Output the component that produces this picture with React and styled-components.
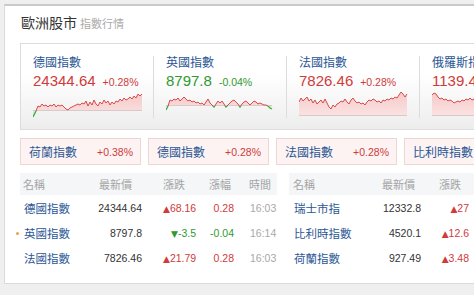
import React from "react";
import styled, { createGlobalStyle } from "styled-components";

const RED = "#cf3b3b";
const GREEN = "#2f9a2f";
const BLUE = "#2a5694";

const Global = createGlobalStyle`
  html, body { margin: 0; padding: 0; }
  body {
    background: #efefef;
    overflow: hidden;
    font-family: "Liberation Sans", "Noto Sans CJK TC", sans-serif;
  }
`;

const Card = styled.div`
  margin: 4px 0 0 4px;
  width: 640px;
  background: #fff;
  border: 1px solid #dadada;
  border-top: 2px solid #c9c9c9;
  padding: 7px 0 13px 15px;
  box-sizing: border-box;
`;

const Title = styled.div`
  font-size: 14px;
  line-height: 20px;
  color: #333;
  margin: 0 0 9px 1px;
`;

const Sub = styled.span`
  font-size: 11px;
  color: #aaa;
  margin-left: 3px;
`;

const SparkPanel = styled.div`
  display: flex;
  width: 600px;
  box-sizing: border-box;
  border: 1px solid #dcdcdc;
  background: linear-gradient(#fff 35%, #ededed);
  padding: 12px 0 11px 12px;
`;

const SparkItem = styled.div`
  width: 120px;
  flex: none;
  border-right: 1px solid #dcdcdc;
  margin-right: 12px;
  display: flex;
  flex-direction: column;
`;

const Label = styled.div`
  font-size: 12px;
  line-height: 14px;
  color: ${BLUE};
  white-space: nowrap;
`;

const ValueRow = styled.div`
  margin-top: 2px;
  height: 18px;
  display: flex;
  align-items: baseline;
  gap: 7px;
  color: ${(p) => (p.$up ? RED : GREEN)};
  white-space: nowrap;
`;

const Value = styled.span`
  font-size: 15px;
  line-height: 18px;
`;

const Pct = styled.span`
  font-size: 10.5px;
`;

const SparkSvg = styled.svg`
  display: block;
  width: 110px;
  height: 28px;
`;

const PillRow = styled.div`
  display: flex;
  gap: 7px;
  margin-top: 8px;
`;

const Pill = styled.div`
  width: 121px;
  height: 27px;
  flex: none;
  box-sizing: border-box;
  border: 1px solid #f1d5d5;
  background: #fdf3f3;
  display: flex;
  align-items: center;
  justify-content: space-between;
  padding: 0 7px 0 8px;
  white-space: nowrap;
`;

const PillName = styled.span`
  font-size: 12px;
  color: ${BLUE};
`;

const PillPct = styled.span`
  font-size: 10.5px;
  color: ${RED};
`;

const Tables = styled.div`
  display: flex;
  gap: 12px;
  margin-top: 8px;
`;

const Table = styled.div`
  flex: none;
  display: flex;
  flex-direction: column;
`;

const Row = styled.div`
  display: grid;
  grid-template-columns: ${(p) => p.$cols};
  height: ${(p) => (p.$head ? "22px" : "25px")};
  align-items: center;
  background: ${(p) => (p.$head ? "#f4f6f8" : "transparent")};
  white-space: nowrap;
`;

const HeadCell = styled.div`
  font-size: 11px;
  color: #a5a5a5;
  padding-left: ${(p) => p.$pl || 0}px;
`;

const NameCell = styled.div`
  position: relative;
  font-size: 11.5px;
  color: ${BLUE};
  padding-left: ${(p) => p.$pl}px;
`;

const Dot = styled.span`
  position: absolute;
  left: -4px;
  top: 50%;
  width: 3px;
  height: 3px;
  margin-top: -1px;
  border-radius: 50%;
  background: #f0a040;
`;

const NumCell = styled.div`
  font-size: 10.5px;
  text-align: right;
  padding-right: ${(p) => p.$pr}px;
  color: ${(p) => p.$color || "#333"};
`;

const Arrow = styled.span`
  font-family: "DejaVu Sans", sans-serif;
  font-size: 9px;
`;

const TimeCell = styled.div`
  font-size: 10.5px;
  color: #a8a8a8;
  padding-left: 1px;
`;

function Spark({ id, pts, base }) {
  const W = 110;
  const H = 28;
  const line = pts.map(([x, y]) => `${x},${y}`).join(" ");
  const last = pts[pts.length - 1][0];
  const area = `${pts[0][0]},${base} ${line} ${last},${base}`;
  return (
    <SparkSvg viewBox={`0 0 ${W} ${H}`}>
      <defs>
        <clipPath id={`${id}a`}>
          <rect x="0" y="0" width={W} height={base} />
        </clipPath>
        <clipPath id={`${id}b`}>
          <rect x="0" y={base} width={W} height={H - base} />
        </clipPath>
        <linearGradient id={`${id}g`} x1="0" y1="0" x2="0" y2="1">
          <stop offset="0" stopColor="#f6c9c9" />
          <stop offset="1" stopColor="#fbe3e3" />
        </linearGradient>
      </defs>
      <polygon points={area} fill={`url(#${id}g)`} clipPath={`url(#${id}a)`} />
      <polygon points={area} fill="#d8f0d8" clipPath={`url(#${id}b)`} />
      <line x1={pts[0][0]} y1={base - 0.5} x2={last} y2={base - 0.5} stroke="#d9c9c9" strokeWidth="1" />
      <polyline points={line} fill="none" stroke="#d64a4a" strokeWidth="1" clipPath={`url(#${id}a)`} />
      <polyline points={line} fill="none" stroke="#3fa93f" strokeWidth="1.3" clipPath={`url(#${id}b)`} />
    </SparkSvg>
  );
}

const sparks = [
  {
    name: "德國指數", value: "24344.64", pct: "+0.28%", up: true, base: 21,
    pts: [[0,27],[3,21],[5,16],[7,17],[9,14],[11,16],[13,15],[15,17],[17,15],[19,16],[21,14],[23,17],[25,15],[27,16],[29,15],[31,17],[33,19],[35,20],[37,18],[39,17],[41,16],[43,15],[45,14],[47,15],[49,13],[51,14],[53,11],[55,16],[57,12],[59,15],[61,10],[63,14],[65,16],[67,12],[69,14],[71,10],[73,13],[75,11],[77,15],[79,12],[81,14],[83,11],[85,12],[87,9],[89,11],[91,8],[93,10],[95,9],[97,7],[99,9],[101,6],[103,8],[105,4],[107,6],[109,4]],
  },
  {
    name: "英國指數", value: "8797.8", pct: "-0.04%", up: false, base: 16,
    pts: [[0,20],[2,16],[4,10],[6,11],[8,9],[10,10],[12,8],[14,11],[16,9],[18,7],[20,9],[22,11],[24,10],[26,12],[28,11],[30,13],[32,12],[34,14],[36,13],[38,15],[40,12],[42,9],[44,13],[46,15],[48,17],[50,14],[52,11],[54,13],[56,11],[58,14],[60,17],[62,15],[64,13],[66,11],[68,10],[70,12],[72,14],[74,17],[76,14],[78,12],[80,11],[82,13],[84,15],[86,13],[88,11],[90,12],[92,14],[94,13],[96,14],[98,15],[100,15],[102,16],[104,18],[106,19]],
  },
  {
    name: "法國指數", value: "7826.46", pct: "+0.28%", up: true, base: 26,
    pts: [[0,12],[2,8],[4,11],[6,9],[8,7],[10,11],[12,9],[14,13],[16,10],[18,14],[20,12],[22,10],[24,13],[26,9],[28,13],[30,17],[32,19],[34,15],[36,17],[38,14],[40,13],[42,11],[44,12],[46,9],[48,12],[50,14],[52,10],[54,8],[56,11],[58,13],[60,12],[62,14],[64,13],[66,15],[68,12],[70,10],[72,11],[74,9],[76,10],[78,12],[80,11],[82,13],[84,10],[86,11],[88,9],[90,10],[92,8],[94,9],[96,7],[98,8],[100,5],[102,2],[104,4],[106,7],[108,4]],
  },
  {
    name: "俄羅斯指數", value: "1139.44", pct: "+0.12%", up: true, base: 26,
    pts: [[0,5],[2,3],[4,4],[6,7],[8,9],[10,8],[12,10],[14,9],[16,11],[18,10],[20,11],[22,13],[24,12],[26,11],[28,12],[30,10],[32,11],[34,9],[36,10],[38,8],[40,10],[42,9],[44,11],[46,10],[48,8],[50,9],[52,7],[54,9],[56,8],[58,10],[60,9],[62,7],[64,8],[66,6],[68,8],[70,7],[72,9],[74,8],[76,6],[78,7],[80,5],[82,7],[84,6],[86,8],[88,6],[90,5],[92,7],[94,6],[96,4],[98,6],[100,5],[102,3],[104,5],[106,4],[108,3]],
  },
];

const pills = [
  ["荷蘭指數", "+0.38%"],
  ["德國指數", "+0.28%"],
  ["法國指數", "+0.28%"],
  ["比利時指數", "+0.28%"],
];

const leftCols = "78px 65px 46px 40px 28px";
const rightCols = "92px 58px 50px 40px 31px";

const leftRows = [
  { name: "德國指數", price: "24344.64", chg: "68.16", pct: "0.28", time: "16:03", up: true },
  { name: "英國指數", price: "8797.8", chg: "-3.5", pct: "-0.04", time: "16:14", up: false, dot: true },
  { name: "法國指數", price: "7826.46", chg: "21.79", pct: "0.28", time: "16:03", up: true },
];

const rightRows = [
  { name: "瑞士市指", price: "12332.8", chg: "27", pct: "0.22", time: "16:03", up: true },
  { name: "比利時指數", price: "4520.1", chg: "12.6", pct: "0.28", time: "16:14", up: true },
  { name: "荷蘭指數", price: "927.49", chg: "3.48", pct: "0.38", time: "16:03", up: true },
];

function QuoteTable({ cols, rows, namePl, pr }) {
  return (
    <Table>
      <Row $head $cols={cols}>
        <HeadCell $pl={namePl - 1}>名稱</HeadCell>
        <HeadCell $pl={1}>最新價</HeadCell>
        <HeadCell>漲跌</HeadCell>
        <HeadCell>漲幅</HeadCell>
        <HeadCell>時間</HeadCell>
      </Row>
      {rows.map((r) => {
        const c = r.up ? RED : GREEN;
        return (
          <Row key={r.name} $cols={cols}>
            <NameCell $pl={namePl}>
              {r.dot && <Dot />}
              {r.name}
            </NameCell>
            <NumCell $pr={pr[0]}>{r.price}</NumCell>
            <NumCell $pr={pr[1]} $color={c}>
              <Arrow>{r.up ? "▲" : "▼"}</Arrow>
              {r.chg}
            </NumCell>
            <NumCell $pr={pr[2]} $color={c}>{r.pct}</NumCell>
            <TimeCell>{r.time}</TimeCell>
          </Row>
        );
      })}
    </Table>
  );
}

export default function App() {
  return (
    <>
      <Global />
      <Card>
        <Title>
          歐洲股市<Sub>指數行情</Sub>
        </Title>
        <SparkPanel>
          {sparks.map((s, i) => (
            <SparkItem key={s.name}>
              <Label>{s.name}</Label>
              <ValueRow $up={s.up}>
                <Value>{s.value}</Value>
                <Pct>{s.pct}</Pct>
              </ValueRow>
              <Spark id={`sp${i}`} pts={s.pts} base={s.base} />
            </SparkItem>
          ))}
        </SparkPanel>
        <PillRow>
          {pills.map(([n, p]) => (
            <Pill key={n}>
              <PillName>{n}</PillName>
              <PillPct>{p}</PillPct>
            </Pill>
          ))}
        </PillRow>
        <Tables>
          <QuoteTable cols={leftCols} rows={leftRows} namePl={4} pr={[21, 13, 15]} />
          <QuoteTable cols={rightCols} rows={rightRows} namePl={5} pr={[18, 20, 15]} />
        </Tables>
      </Card>
    </>
  );
}
